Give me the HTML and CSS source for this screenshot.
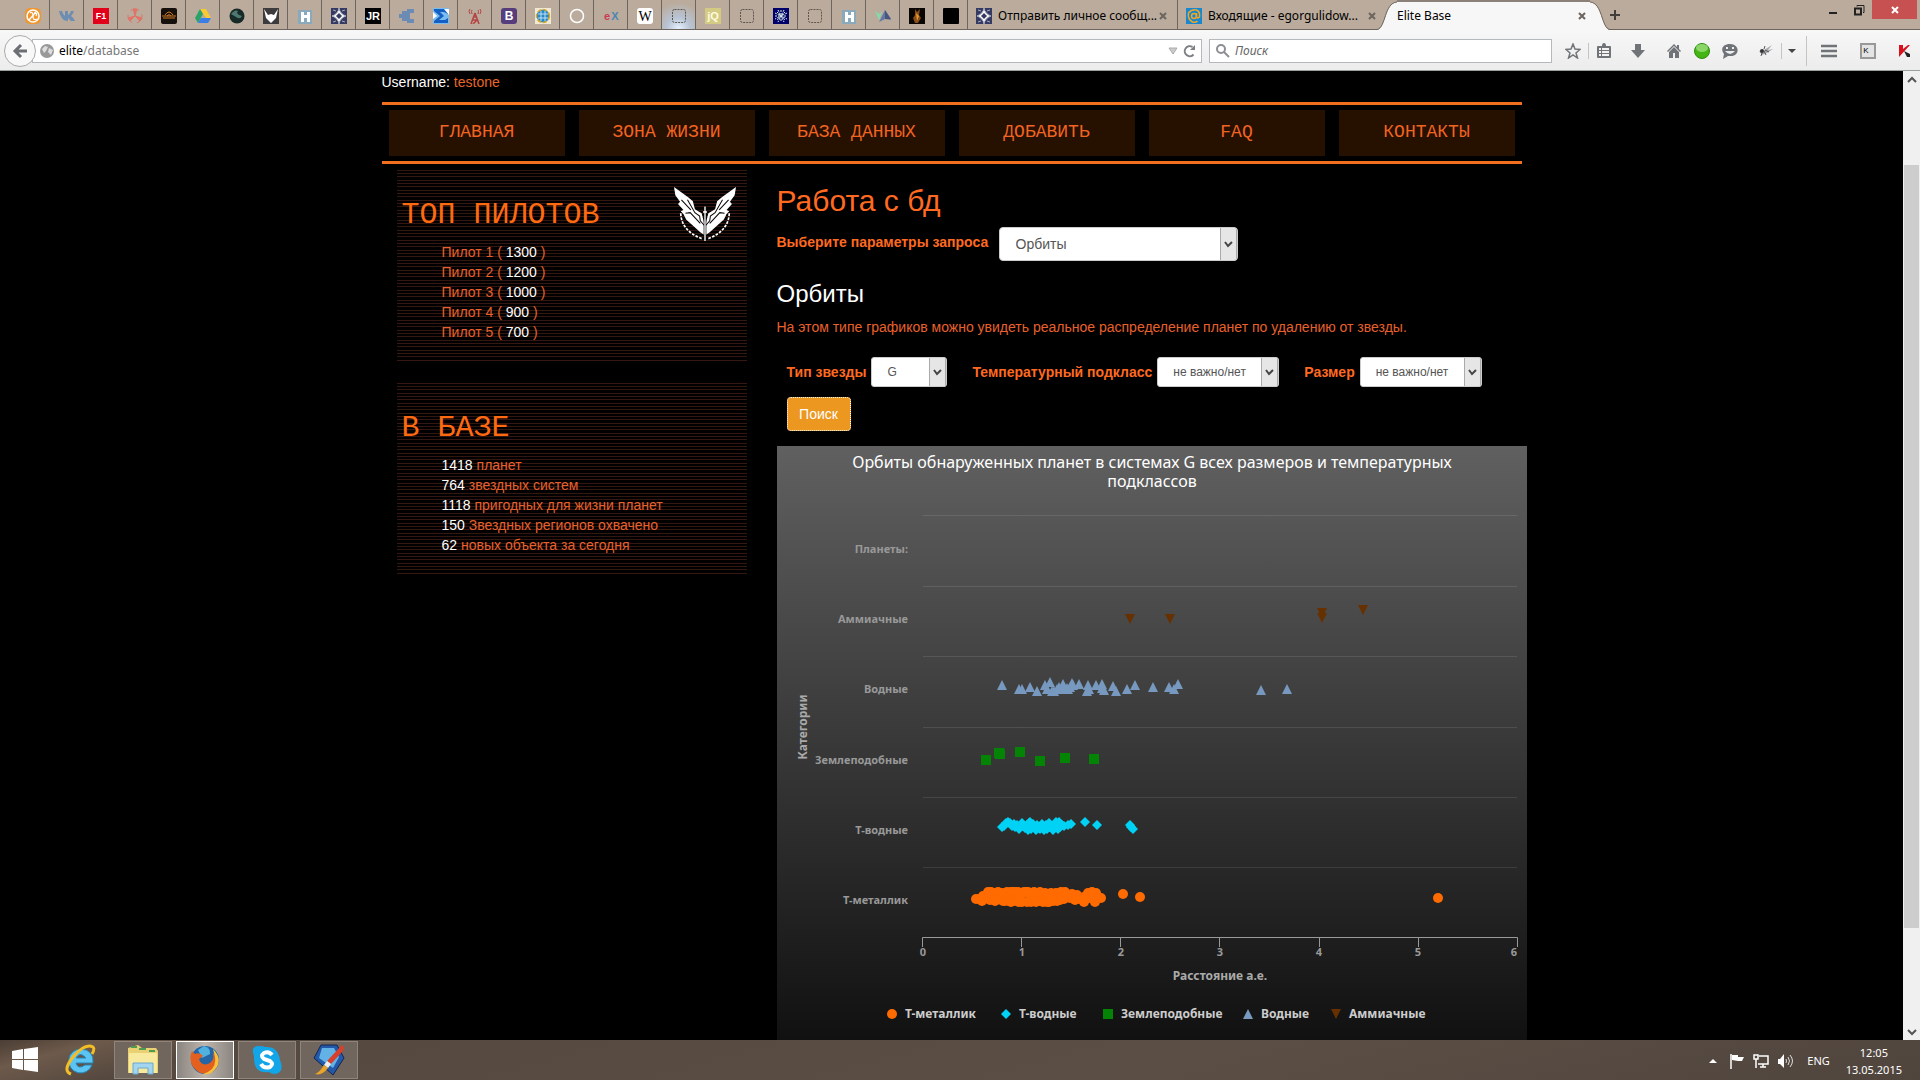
FILE: index.html
```html
<!DOCTYPE html>
<html lang="ru">
<head>
<meta charset="utf-8">
<title>Elite Base</title>
<link rel="stylesheet" href="styles.css">
</head>
<body>
<header class="browser">
  <div class="tabstrip">
    <nav class="pinned">
      <button class="pin"><svg viewBox="0 0 16 16"><rect width="16" height="16" rx="5" fill="#f0962e"/><circle cx="8" cy="8" r="6" fill="none" stroke="#fff" stroke-width="1.5"/><path d="M4 12L11 4M5 5q3-2 3 3t4 3M9 5q4 0 2 3" fill="none" stroke="#fff" stroke-width="1.3"/></svg></button>
      <button class="pin"><svg viewBox="0 0 16 16"><path d="M0 3h3q1 4 3 5V3h3v4q2-1 3-4h3q-1 3-3 5 3 2 4 5h-4l-3-3v3Q2 13 0 3z" fill="#6d8db3"/></svg></button>
      <button class="pin"><svg viewBox="0 0 16 16"><rect width="16" height="16" fill="#e2001a"/><text x="8" y="11" class="fav-text" fill="#fff">F1</text></svg></button>
      <button class="pin"><svg viewBox="0 0 16 16" fill="none" stroke="#e07468"><circle cx="8" cy="8" r="7" stroke-dasharray="9 5"/><path d="M8 8L6 1h4zM8 8L1 10l2 3zM8 8l7 2-2 3z" fill="#e07468"/></svg></button>
      <button class="pin"><svg viewBox="0 0 16 16"><rect width="16" height="16" rx="2" fill="#15100c"/><path d="M1 8h14M2 10h12M4 7q4-6 8 0M6 8q2-3 4 0" fill="none" stroke="#d07a26"/></svg></button>
      <button class="pin"><svg viewBox="0 0 16 16"><path d="M5 1h6l5 9h-5z" fill="#fbc933"/><path d="M5 1L0 10l3 5 5-9z" fill="#29a366"/><path d="M3 15l3-5h10l-3 5z" fill="#3d7de8"/></svg></button>
      <button class="pin"><svg viewBox="0 0 16 16"><circle cx="8" cy="8" r="7.5" fill="#182a28"/><path d="M2 6q4-5 7-3-3 3 4 5-2 4-6 1z" fill="#4e7770"/></svg></button>
      <button class="pin"><svg viewBox="0 0 16 16"><rect width="16" height="16" fill="#3d3b3d"/><path d="M1 1l4 6 3-1 3 1 4-6-2 9-5 5-5-5z" fill="#fff"/></svg></button>
      <button class="pin"><svg viewBox="0 0 16 16"><rect x="1" y="2" width="14" height="14" fill="#8aa9bc"/><path d="M4 4h3v3h3V4h3v10h-3v-4H7v4H4z" fill="#fff"/></svg></button>
      <button class="pin"><svg viewBox="0 0 16 16"><rect width="16" height="16" fill="#343a62"/><path d="M8 0q1 6 7 8-6 2-7 8-1-6-7-8 6-2 7-8M2 2l3 1M14 2l-3 1M2 14l3-1M14 14l-3-1" stroke="#aab" fill="#fff"/><path d="M8 5l3 3-3 3-3-3z" fill="#343a62"/></svg></button>
      <button class="pin"><svg viewBox="0 0 16 16"><rect width="16" height="16" fill="#000"/><text x="8" y="12" class="fav-mid" fill="#fff">JR</text></svg></button>
      <button class="pin"><svg viewBox="0 0 16 16"><path d="M0 6h3V3h5V1h7v4h-4v6h4v4H8v-2H3v-3H0z" fill="#6b8bb5"/></svg></button>
      <button class="pin"><svg viewBox="0 0 16 16"><rect width="16" height="16" fill="#79bdf0"/><path d="M1 1h14v5L11 4H7l4 4-5 4h6l3-2v5H1v-2l6-5-6-5z" fill="#145fc4"/><path d="M11 1h5v6zM0 4l4 4-4 3z" fill="#fff"/></svg></button>
      <button class="pin"><svg viewBox="0 0 16 16" fill="none" stroke="#b64443"><path d="M8 5L4 16M8 5l4 11M6 9h4M5 12h6M6 16l4-4" stroke-width="1.5"/><path d="M5 2q-1 1 0 4M3 1Q1 3 3 6M11 2q1 1 0 4M13 1q2 2 0 5"/></svg></button>
      <button class="pin"><svg viewBox="0 0 16 16"><rect width="16" height="16" rx="3" fill="#563d7c"/><text x="8" y="12" class="fav-letter" fill="#fff">B</text></svg></button>
      <button class="pin"><svg viewBox="0 0 16 16"><rect width="16" height="16" fill="#f0ead5"/><circle cx="8" cy="8" r="6.5" fill="#2987c9" stroke="#dea922" stroke-width="1.5" stroke-dasharray="4 2"/><path d="M3 6h10M3 10h10M6 3v10M10 3v10" stroke="#bfe0f2"/></svg></button>
      <button class="pin"><svg viewBox="0 0 16 16"><circle cx="8" cy="8" r="6.5" fill="none" stroke="#fff" stroke-width="1.5"/></svg></button>
      <button class="pin"><svg viewBox="0 0 16 16"><text x="4" y="12" class="fav-mid" fill="#cc3b55">e</text><text x="12" y="12" class="fav-mid" fill="#4a86b5">X</text></svg></button>
      <button class="pin"><svg viewBox="0 0 16 16"><rect width="16" height="16" rx="3" fill="#fff"/><text x="8" y="13" class="fav-serif">W</text></svg></button>
      <button class="pin glow"><svg viewBox="0 0 16 16"><rect x="1.500" y="1.500" width="13" height="13" rx="2" class="blank"/></svg></button>
      <button class="pin"><svg viewBox="0 0 16 16"><rect width="16" height="16" fill="#d3cb83"/><text x="8" y="12" class="fav-mid" fill="#fffbe0">jQ</text></svg></button>
      <button class="pin"><svg viewBox="0 0 16 16"><rect x="1.500" y="1.500" width="13" height="13" rx="2" class="blank"/></svg></button>
      <button class="pin"><svg viewBox="0 0 16 16"><rect width="16" height="16" fill="#00006b"/><path d="M8 2v12M2 8h12M4 4l8 8M12 4l-8 8M5 2l6 12M11 2L5 14M2 5l12 6M14 5L2 11" stroke="#d8f0e8" stroke-dasharray="2 1"/></svg></button>
      <button class="pin"><svg viewBox="0 0 16 16"><rect x="1.500" y="1.500" width="13" height="13" rx="2" class="blank"/></svg></button>
      <button class="pin"><svg viewBox="0 0 16 16"><rect x="1" y="2" width="14" height="14" fill="#8aa9bc"/><path d="M4 4h3v3h3V4h3v10h-3v-4H7v4H4z" fill="#fff"/></svg></button>
      <button class="pin"><svg viewBox="0 0 16 16"><path d="M0 3l4 9 3-8-3 2z" fill="#82dcaa"/><path d="M10 2L4 14l6-3 6 1z" fill="#6478a8"/><path d="M10 2v9l6 0z" fill="#49557c"/></svg></button>
      <button class="pin"><svg viewBox="0 0 16 16"><rect width="16" height="16" fill="#090503"/><path d="M6 1l2 3 3-3-1 6 2 3-3 5H6l-2-5 2-3z" fill="#8b4d16"/><path d="M7 5l1 8 2-5z" fill="#e29c36"/></svg></button>
      <button class="pin"><svg viewBox="0 0 16 16"><rect width="16" height="16" rx="1" fill="#000"/></svg></button>
    </nav>
    <div class="tab first">
      <svg class="fav" viewBox="0 0 16 16"><rect width="16" height="16" fill="#343a62"/><path d="M8 0q1 6 7 8-6 2-7 8-1-6-7-8 6-2 7-8M2 2l3 1M14 2l-3 1M2 14l3-1M14 14l-3-1" stroke="#aab" fill="#fff"/><path d="M8 5l3 3-3 3-3-3z" fill="#343a62"/></svg>
      <span class="tab-title">Отправить личное сообщ...</span>
      <button class="x"><svg viewBox="0 0 8 8"><path d="M1 1l6 6M7 1L1 7"/></svg></button>
    </div>
    <div class="tab second">
      <svg class="fav" viewBox="0 0 16 16"><rect width="16" height="16" fill="#1688cf"/><circle cx="8" cy="8" r="2.5" fill="none" stroke="#f5a623" stroke-width="1.5"/><path d="M10.500 5v4q1 2 3 0 1-5-3-7-5-1-8 3-1 6 4 9 3 1 5-1" fill="none" stroke="#f5a623" stroke-width="1.5"/></svg>
      <span class="tab-title">Входящие - egorgulidow...</span>
      <button class="x"><svg viewBox="0 0 8 8"><path d="M1 1l6 6M7 1L1 7"/></svg></button>
    </div>
    <svg class="curve" viewBox="0 0 20 30"><path d="M0 30C9 29 7 4 20 2V30z" fill="#f7f7f7"/><path d="M0 29.500C9 28 7 3 20 2" fill="none" stroke="#6d655e"/></svg>
    <div class="tab active">
      <span class="tab-title">Elite Base</span>
      <button class="x"><svg viewBox="0 0 8 8"><path d="M1 1l6 6M7 1L1 7"/></svg></button>
    </div>
    <svg class="curve" viewBox="0 0 20 30"><path d="M20 30C11 29 13 4 0 2V30z" fill="#f7f7f7"/><path d="M20 29.500C11 28 13 3 0 2" fill="none" stroke="#6d655e"/></svg>
    <button class="newtab"><svg viewBox="0 0 10 10"><path d="M5 0v10M0 5h10" stroke="#443e39" stroke-width="2"/></svg></button>
    <div class="winbtns">
      <button class="wb"><svg viewBox="0 0 12 12"><path d="M2 9h8" stroke="#222" stroke-width="2"/></svg></button>
      <button class="wb"><svg viewBox="0 0 12 12" fill="none" stroke="#222"><path d="M4 2.500V1.500h7v7h-1"/><path d="M2 4.500h6v6H2z" stroke-width="2"/></svg></button>
      <button class="wb close"><svg viewBox="0 0 12 12"><path d="M3 3l6 6M9 3L3 9" stroke="#fff" stroke-width="2"/></svg></button>
    </div>
  </div>
  <div class="toolbar">
    <button class="back"><svg viewBox="0 0 16 16"><path d="M9 2L3 8l6 6M3 8h12" fill="none" stroke="#6b6e72" stroke-width="3"/></svg></button>
    <div class="urlbox">
      <svg class="i14" viewBox="0 0 14 14"><circle cx="7" cy="7" r="7" fill="#999"/><path d="M2 5l3-3 3 1-2 4-2 2zM9 4l4 2-2 5-3-3z" fill="#ddd"/></svg>
      <div class="url"><span class="host">elite</span>/database</div>
      <svg class="drop" viewBox="0 0 10 8"><path d="M1 1h8L5 7z" fill="#ccc" stroke="#aaa"/></svg>
      <svg class="i14" viewBox="0 0 14 14"><path d="M10.500 10.500A5 5 0 1 1 9.500 3" fill="none" stroke="#7c8084" stroke-width="2"/><path d="M12 1v5H7z" fill="#7c8084"/></svg>
    </div>
    <div class="searchbox">
      <svg class="i14" viewBox="0 0 14 14" fill="none" stroke="#8b8f94" stroke-width="2"><circle cx="5" cy="5" r="4"/><path d="M8 8l5 5"/></svg>
      <input class="search" type="text" placeholder="Поиск" aria-label="Поиск">
    </div>
    <div class="tools">
      <button><svg viewBox="0 0 16 16"><path d="M8 1l2 5 5 .5-4 3.500 1.500 5L8 12l-4.500 3L5 10 1 6.500 6 6z" fill="none" stroke="#707478" stroke-width="1.500"/></svg></button>
      <i class="sep"></i>
      <button><svg viewBox="0 0 16 16"><path d="M2 3h12q1 0 1 1v10q0 1-1 1H2q-1 0-1-1V4q0-1 1-1zM6 3q0-3 2-3t2 3z" fill="#707478"/><path d="M3 6h2m1 0h7M3 9h2m1 0h7M3 12h2m1 0h7" fill="none" stroke="#f2f2f2" stroke-width="2"/></svg></button>
      <button class="dl"><svg viewBox="0 0 16 16"><path d="M5 1h6v6h4l-7 8-7-8h4z" fill="#707478"/></svg></button>
      <button class="home"><svg viewBox="0 0 16 16"><path d="M8 1L1 8l1 1 6-6 6 6 1-1-2-2V2h-2v2z" fill="#707478"/><path d="M8 4l-5 5v6h4v-5h2v5h4V9z" fill="#707478"/></svg></button>
      <button class="green"><svg viewBox="0 0 16 16"><circle cx="8" cy="8" r="7.500" fill="#43b514" stroke="#2f8b10"/><ellipse cx="8" cy="5" rx="6" ry="4" fill="#8ad667"/></svg></button>
      <button class="chat"><svg viewBox="0 0 16 16"><path d="M8 1c10 0 10 12 1 12l-3 0-5 3 1-5C-2 6 1 1 8 1z" fill="#707478"/><path d="M5 4v2M11 4v2" stroke="#eee" stroke-width="2"/><path d="M3 8h10q-5 6-10 0z" fill="#eee"/></svg></button>
      <button class="fly"><svg viewBox="0 0 16 16"><path d="M1 8l5-1 8-5-4 5 5-1-6 4-5 2z" fill="#a9adaf"/><circle cx="4" cy="8" r="2" fill="#333"/><path d="M6 8l2 4M4 10l-1 3M7 7l4 2M6 6l1-3" stroke="#555"/></svg></button>
      <i class="sep"></i>
      <button class="narrow"><svg viewBox="0 0 10 16"><path d="M1 6h8L5 10z" fill="#444"/></svg></button>
      <i class="sep tall"></i>
      <button class="menu"><svg viewBox="0 0 16 16"><path d="M0 3h16M0 8h16M0 13h16" stroke="#707478" stroke-width="2.500"/></svg></button>
      <button class="kbd"><svg viewBox="0 0 16 16"><rect x="1" y="1" width="14" height="14" fill="#e4e4e4" stroke="#999" stroke-width="2"/><text x="6" y="10" class="fav-small">K</text></svg></button>
      <button class="kasp"><svg viewBox="0 0 16 16"><path d="M3 2h4v4l5-4h2L3 14z" fill="#d8121c"/><path d="M8 8l6 3v3h-3z" fill="#222"/></svg></button>
    </div>
  </div>
</header>

<div class="viewport">
<div class="page">
  <div class="container">
    <p class="user">Username: <a href="#">testone</a></p>
    <nav class="mainnav">
      <a href="#">ГЛАВНАЯ</a><a href="#">ЗОНА ЖИЗНИ</a><a href="#">БАЗА ДАННЫХ</a><a href="#">ДОБАВИТЬ</a><a href="#">FAQ</a><a href="#">КОНТАКТЫ</a>
    </nav>
    <div class="columns">
      <aside class="side">
        <section class="panel">
          <div class="panel-head">
            <h2>ТОП ПИЛОТОВ</h2>
            <svg class="emblem" viewBox="0 0 184 160">
              <defs><g id="wing">
                <path d="M0 0L42 30 56 42 62 66 82 78 90 108V142L78 134 36 96 28 80 20 72 28 68 12 50 18 44 4 24z" fill="#fff"/>
                <path d="M40 38l22 38 14 10 2 14 12 14M34 78l14-2 30 32M22 38l28 30" fill="none" stroke="#0a0403" stroke-width="3"/>
                <path d="M20 78Q22 130 82 153" fill="none" stroke="#fff" stroke-width="5" stroke-dasharray="8 4"/>
              </g></defs>
              <use href="#wing"/><use href="#wing" transform="translate(184 0) scale(-1 1)"/>
              <path d="M92 58v100" stroke="#000" stroke-width="8"/><path d="M92 58v102M86 74h12" stroke="#fff" stroke-width="4"/>
            </svg>
          </div>
          <ul>
            <li>Пилот 1 ( <b>1300</b> )</li><li>Пилот 2 ( <b>1200</b> )</li><li>Пилот 3 ( <b>1000</b> )</li><li>Пилот 4 ( <b>900</b> )</li><li>Пилот 5 ( <b>700</b> )</li>
          </ul>
        </section>
        <section class="panel">
          <div class="panel-head"><h2>В БАЗЕ</h2></div>
          <ul>
            <li><b>1418</b> планет</li><li><b>764</b> звездных систем</li><li><b>1118</b> пригодных для жизни планет</li><li><b>150</b> Звездных регионов охвачено</li><li><b>62</b> новых объекта за сегодня</li>
          </ul>
        </section>
      </aside>
      <main class="content">
        <h1>Работа с бд</h1>
        <div class="query"><label for="kind">Выберите параметры запроса</label><select id="kind" class="wide"><option>Орбиты</option></select></div>
        <h3>Орбиты</h3>
        <p class="lead">На этом типе графиков можно увидеть реальное распределение планет по удалению от звезды.</p>
        <form class="filters">
          <div class="field"><label for="star">Тип звезды</label><select id="star" class="short"><option>G</option></select></div>
          <div class="field"><label for="temp">Температурный подкласс</label><select id="temp"><option>не важно/нет</option></select></div>
          <div class="field"><label for="size">Размер</label><select id="size"><option>не важно/нет</option></select></div>
          <button type="button" class="go">Поиск</button>
        </form>
        <svg class="chart" viewBox="0 0 750 600">
          <defs>
            <linearGradient id="bg" x1="0" y1="0" x2="0" y2="1"><stop offset="0" stop-color="#606060"/><stop offset="1" stop-color="#101010"/></linearGradient>
            <marker id="m-circle" viewBox="0 0 10 10" refX="5" refY="5" markerWidth="10" markerHeight="10" markerUnits="userSpaceOnUse"><circle cx="5" cy="5" r="5" fill="#ff6b00"/></marker>
            <marker id="m-diamond" viewBox="0 0 10 10" refX="5" refY="5" markerWidth="10" markerHeight="10" markerUnits="userSpaceOnUse"><path d="M5 0l5 5-5 5-5-5z" fill="#00d2f5"/></marker>
            <marker id="m-square" viewBox="0 0 10 10" refX="5" refY="5" markerWidth="10" markerHeight="10" markerUnits="userSpaceOnUse"><path d="M0 0h10v10H0z" fill="#048404"/></marker>
            <marker id="m-up" viewBox="0 0 10 10" refX="5" refY="5" markerWidth="10" markerHeight="10" markerUnits="userSpaceOnUse"><path d="M5 0l5 10H0z" fill="#7798bf"/></marker>
            <marker id="m-down" viewBox="0 0 10 10" refX="5" refY="5" markerWidth="10" markerHeight="10" markerUnits="userSpaceOnUse"><path d="M0 0h10L5 10z" fill="#663000"/></marker>
          </defs>
          <rect width="750" height="600" fill="url(#bg)"/>
          <g class="c-title"><text x="375" y="22">Орбиты обнаруженных планет в системах G всех размеров и температурных</text><text x="375" y="41">подклассов</text></g>
          <path class="grid" d="M146 69.500h594M146 140.500h594M146 210.500h594M146 281.500h594M146 351.500h594M146 421.500h594"/>
          <path class="axis" d="M145.500 501v-9.500h595V501M244.500 492v9M343.500 492v9M442.500 492v9M542.500 492v9M641.500 492v9"/>
          <g class="c-rows"><text x="131" y="107">Планеты:</text><text x="131" y="177">Аммиачные</text><text x="131" y="247">Водные</text><text x="131" y="318">Землеподобные</text><text x="131" y="388">Т-водные</text><text x="131" y="458">Т-металлик</text></g>
          <g class="c-ticks"><text x="146" y="510">0</text><text x="245" y="510">1</text><text x="344" y="510">2</text><text x="443" y="510">3</text><text x="542" y="510">4</text><text x="641" y="510">5</text><text x="737" y="510">6</text></g>
          <text class="c-axis" x="443" y="534">Расстояние а.е.</text>
          <text class="c-axis" transform="translate(30 281) rotate(-90)">Категории</text>
          <path class="series down" d="M353 173L393 173 545 172 545 167 586 164"/>
          <path class="series up" d="M225 239L245 243 242 243 253 241 260 245 268 239 273 236 270 243 275 245 277 245 280 243 282 241 286 238 286 243 290 242 293 241 295 237 296 239 291 243 302 238 311 239 312 243 310 245 319 239 325 238 325 242 327 244 336 240 339 245 350 243 358 239 376 241 392 241 397 243 401 238 484 244 510 243"/>
          <path class="series square" d="M209 314L222 307 223 308 243 306 263 315 288 312 317 313"/>
          <path class="series diamond" d="M225 381L227 380 229 377 231 376 233 377 235 380 237 378 238 381 240 379 242 383 243 381 245 377 246 380 248 382 250 379 252 377 251 384 253 376 254 383 256 378 257 381 259 384 260 379 262 382 263 383 265 378 266 381 267 384 269 379 270 383 272 377 273 381 275 380 276 384 278 378 279 376 281 383 282 376 283 381 285 379 287 380 291 379 294 378 308 376 320 379 353 379 354 381 356 383"/>
          <path class="series circle" d="M199 453L202 453 205 455 206 450 209 452 211 446 213 454 214 446 217 450 218 455 218 447 221 446 223 453 225 447 226 455 228 455 230 446 232 451 232 455 234 456 234 446 236 446 239 455 238 446 241 446 243 451 242 456 245 456 247 446 249 446 250 456 251 446 254 452 254 456 256 455 257 446 260 449 259 456 262 455 263 446 266 456 268 447 270 452 270 456 272 456 274 447 276 455 279 447 281 451 280 455 283 454 284 446 287 453 288 446 291 449 293 452 295 448 298 454 300 449 303 453 307 456 307 451 311 447 313 452 315 446 318 456 319 447 321 451 324 452 346 448 363 451 661 452"/>
          <g class="legend"><circle cx="115" cy="568" r="5" fill="#ff6b00"/><path d="M229 563l5 5-5 5-5-5z" fill="#00d2f5"/><path d="M326 563h10v10h-10z" fill="#048404"/><path d="M471 563l5 10h-10z" fill="#7798bf"/><path d="M554 563h10l-5 10z" fill="#663000"/>
          <text x="128" y="572">Т-металлик</text><text x="242" y="572">Т-водные</text><text x="344" y="572">Землеподобные</text><text x="484" y="572">Водные</text><text x="572" y="572">Аммиачные</text></g>
        </svg>
      </main>
    </div>
  </div>
</div>
<div class="scrollbar">
  <button><svg viewBox="0 0 17 17"><path d="M5 11l4-4 4 4" fill="none" stroke="#555" stroke-width="2"/></svg></button>
  <div class="track"><div class="thumb"></div></div>
  <button><svg viewBox="0 0 17 17"><path d="M5 7l4 4 4-4" fill="none" stroke="#555" stroke-width="2"/></svg></button>
</div>
</div>

<footer class="taskbar">
  <button class="start"><svg viewBox="0 0 26 26"><path d="M0 4l11-2v10H0zM12 2l14-2v12H12zM0 13h11v10L0 21zM12 13h14v12l-14-2z" fill="#fff"/></svg></button>
  <button class="ie"><svg viewBox="0 0 32 32"><path d="M17 5a12 12 0 1 0 11 16h-7q-7 5-9-2h17Q30 6 17 5zM12 14q4-7 10 0z" fill="#5bc4f2" stroke="#2489bd"/><path d="M7 30Q-2 27 9 13 21-1 29 3q2 2-1 7" fill="none" stroke="#f2bd25" stroke-width="3"/></svg></button>
  <button class="task"><svg viewBox="0 0 32 32"><path d="M1 4l10-3 4 3h14l2 3v22H1z" fill="#e9d073"/><path d="M2 9h28v20H2z" fill="#f7e99d"/><path d="M4 3h6M12 5h7M22 7h6" stroke="#4c9d53" stroke-width="2"/><path d="M6 30V19h20v11h-5v-6H11v6z" fill="#a4d5f0" stroke="#6ba8cc"/></svg></button>
  <button class="task on"><svg viewBox="0 0 32 32"><circle cx="16" cy="16" r="14" fill="#2465a8"/><path d="M15 2q7 2 6 8l-8 4-4-8z" fill="#50b0de"/><path d="M3 7l3 3q5-2 8 2l-4 3q2 7 9 5 7-3 5-11 6 4 2 13Q16 36 5 24-1 16 3 7z" fill="#e4601e"/><path d="M24 5q9 9 4 18-6 9-14 7 14-4 12-17z" fill="#fbc13a"/></svg></button>
  <button class="task"><svg viewBox="0 0 32 32"><path d="M3 12Q-1 2 8 2q4 0 6 1 13-1 15 13 5 12-5 14-4 0-6-2Q2 30 3 12z" fill="#12a5e8"/><path d="M21 11q-3-4-8-2-4 3 0 6l6 2q4 3 0 6-6 2-9-3" fill="none" stroke="#fff" stroke-width="4"/></svg></button>
  <button class="task"><svg viewBox="0 0 32 32"><path d="M8 1h16l7 13-11 17L1 14z" fill="#2458a9" stroke="#12254e"/><path d="M9 4l12 0 5 9-6 11L6 14z" fill="#63b2e6"/><path d="M29 1q4 2 0 7L18 20l-4-3z" fill="#d6402c"/><path d="M14 17l4 3-3 4-4-3z" fill="#eee"/><path d="M11 21l4 3q-6 8-13 6 4-1 9-9z" fill="#eaa428"/></svg></button>
  <div class="tray">
    <svg class="t-up" viewBox="0 0 8 6"><path d="M0 5h8L4 1z" fill="#fff"/></svg>
    <svg viewBox="0 0 16 16"><path d="M2 1v15" stroke="#fff" stroke-width="1.500"/><path d="M3 2h6v2h6l-2 4H9L3 7z" fill="#fff"/></svg>
    <svg viewBox="0 0 16 16" fill="none" stroke="#fff" stroke-width="1.500"><path d="M6 3h9v8H5M10 11v3M7 14h6M3 6v9M1 2h4v4H1z"/></svg>
    <svg viewBox="0 0 16 16"><path d="M1 6h2l4-5v14l-4-4H1z" fill="#fff"/><path d="M9 6q1 2 0 4M11 4q3 4 0 8M13 2q5 6 0 12" fill="none" stroke="#ddd"/></svg>
    <span class="lang">ENG</span>
    <div class="clock"><span>12:05</span><span>13.05.2015</span></div>
  </div>
</footer>
</body>
</html>
```
FILE: styles.css
```css
* { box-sizing: border-box; }
body { margin: 0; height: 100vh; display: flex; flex-direction: column; overflow: hidden; background: #000; font: 14px/20px "Liberation Sans", Arial, sans-serif; color: #fff; }
button { border: 0; padding: 0; background: none; font: inherit; color: inherit; display: flex; align-items: center; justify-content: center; flex: none; }
svg { display: block; flex: none; }
a { color: #e8662a; text-decoration: none; }

.browser { flex: none; font: 12px/16px "Noto Sans", "Open Sans", sans-serif; color: #000; }
.tabstrip { display: flex; height: 30px; background: #baab9c; box-shadow: inset 0 -1px #6d655e; }
.pinned { display: flex; padding-left: 16px; }
.pin { width: 34px; height: 29px; padding-top: 3px; border-right: 1px solid #6d655e; }
.pin svg, .fav { width: 16px; height: 16px; }
.glow { background: radial-gradient(circle at 50% 100%, #e8f3ff 0, #b8c4d4 35%, transparent 80%); }
.blank { fill: none; stroke: #5d554e; stroke-dasharray: 2 1; }
.fav-text { font: bold 9px "Liberation Sans", sans-serif; text-anchor: middle; }
.fav-mid { font: bold 11px "Liberation Sans", sans-serif; text-anchor: middle; }
.fav-letter { font: bold 12px "Liberation Sans", sans-serif; text-anchor: middle; }
.fav-serif { font: 14px "Liberation Serif", serif; text-anchor: middle; }
.fav-small { font: 8px "Liberation Sans", sans-serif; text-anchor: middle; }
.tab { display: flex; align-items: center; height: 29px; padding: 3px 10px 0 8px; gap: 6px; }
.tab-title { flex: 1; min-width: 0; white-space: nowrap; }
.first { width: 210px; border-right: 1px solid #6d655e; }
.second { width: 199px; padding-right: 1px; }
.active { width: 193px; height: 30px; padding: 0 4px 0 0; background: #f7f7f7; border-top: 2px solid #8b8178; }
.x svg { width: 8px; height: 8px; stroke: #6b6560; stroke-width: 2; }
.curve { width: 20px; height: 30px; }
.newtab svg { width: 10px; height: 10px; }
.winbtns { display: flex; margin-left: auto; padding-right: 3px; }
.wb { width: 26px; height: 19px; }
.wb svg { width: 12px; height: 12px; }
.close { width: 45px; background: #c75050; }

.toolbar { display: flex; align-items: center; height: 41px; padding: 1px 0 0 4px; background: linear-gradient(#f7f7f7, #ececec); border-bottom: 1px solid #9aa09c; }
.back { width: 32px; height: 32px; border: 1px solid #aaa; border-radius: 50%; background: #f8f8f8; z-index: 1; }
.back svg { width: 16px; height: 16px; }
.urlbox, .searchbox { display: flex; align-items: center; height: 24px; background: #fff; border: 1px solid #b5b9bb; }
.urlbox { flex: 1; margin-left: -4px; padding: 0 4px 0 7px; gap: 5px; }
.url { flex: 1; color: #777; }
.host { color: #000; }
.i14 { width: 14px; height: 14px; }
.drop { width: 10px; height: 8px; }
.searchbox { width: 343px; margin-left: 7px; padding-left: 6px; gap: 5px; }
.search { flex: 1; border: 0; outline: 0; padding: 0; font: italic 12px/16px "Noto Sans", "Open Sans", sans-serif; }
.search::placeholder { color: #666; opacity: 1; }
.tools { display: flex; align-items: center; width: 368px; padding-left: 13px; }
.tools svg { width: 16px; height: 16px; }
.sep { width: 1px; height: 16px; background: #c4c4c4; margin: 0 7px; }
.tall { height: 30px; }
.dl { margin-left: 18px; }
.home { margin-left: 20px; }
.green, .chat { margin-left: 12px; }
.fly { margin-left: 20px; }
.narrow { width: 10px; margin: 0 2px 0 -2px; }
.menu { margin-left: 7px; }
.kbd { margin-left: 23px; }
.kasp { margin-left: 20px; }

.viewport { flex: 1; min-height: 0; display: flex; }
.page { flex: 1; overflow: hidden; }
.container { width: 1140px; max-width: 100%; margin: 0 auto; }
.user { margin: 0; padding: 1px 0 10px; }
.mainnav { display: grid; grid-template-columns: repeat(6, 1fr); gap: 14px; padding: 5px 7px; border: solid #f26f1f; border-width: 3px 0; }
.mainnav a { background: #261000; color: #f26422; font: 18px/24px "Liberation Mono", monospace; text-align: center; padding: 10px 0 12px; }
.columns { display: grid; grid-template-columns: 350px minmax(0, 1fr); gap: 30px; padding-left: 15px; margin-right: -5px; }
.side { padding-top: 6px; }
.panel { height: 191px; margin-bottom: 22px; background:
  linear-gradient(#331710 1px, transparent 1px 3px, #331710 3px 4px, transparent 4px 6px, #331710 6px 7px, transparent 7px) 0 0 / 100% 10px; }
.panel-head { display: flex; justify-content: space-between; height: 71px; padding: 17px 11px 0 5px; }
.panel h2 { margin: 12px 0 0; font: 30px/33px "Liberation Mono", monospace; color: #ff6a10; }
.emblem { width: 62px; height: 54px; }
.panel ul { list-style: none; margin: 0; padding: 1px 0 0 45px; color: #e8602c; }
.panel b { font-weight: normal; color: #fff; }

.content { padding-top: 20px; }
h1 { margin: 0 0 9px; font-size: 30px; line-height: 34px; font-weight: normal; color: #ff6a20; }
label { font-weight: bold; color: #ff6a20; }
.query { display: flex; gap: 4px; }
.query label { width: 218px; padding-top: 5px; }
select { appearance: none; width: 122px; height: 30px; padding: 0 15px; border: 1px solid #ccc; border-radius: 3px; color: #555; font: 12px/18px "Liberation Sans", Arial, sans-serif;
  background: #fff url("data:image/svg+xml,%3Csvg xmlns='http://www.w3.org/2000/svg' width='17' height='40'%3E%3Cpath d='M.5 .5h16v39H.5z' fill='%23e6e6e6' stroke='%23aaa'/%3E%3Cpath d='M5 18l3 4 4-4' fill='none' stroke='%23444' stroke-width='2'/%3E%3C/svg%3E") right center no-repeat; }
.wide { width: 239px; height: 34px; font-size: 14px; padding: 0 16px; border-radius: 4px; }
.short { width: 76px; }
h3 { margin: 20px 0 0; font-size: 24px; line-height: 26px; font-weight: normal; }
.lead { margin: 10px 0 20px; color: #e8602c; }
.filters { display: flex; flex-wrap: wrap; gap: 10px 25px; padding: 0 10px 15px; }
.field { display: flex; align-items: center; gap: 5px; }
.go { width: 64px; height: 34px; border: 1px dotted #fff; border-radius: 4px; background: #ec971f; color: #fff; }

.chart { width: 100%; height: auto; font-family: "Noto Sans", "Open Sans", sans-serif; }
.c-title { font-size: 16px; fill: #fff; text-anchor: middle; }
.grid { stroke: rgba(255, 255, 255, .1); }
.axis { stroke: #999; fill: none; }
.c-rows { font-size: 11px; font-weight: bold; fill: #999; text-anchor: end; }
.c-ticks { font-size: 11px; font-weight: bold; fill: #999; text-anchor: middle; }
.c-axis { font-size: 12px; font-weight: bold; fill: #aaa; text-anchor: middle; }
.legend { font-size: 12px; font-weight: bold; }
.legend text { fill: #ccc; }
.series { fill: none; }
.circle { marker: url(#m-circle); }
.diamond { marker: url(#m-diamond); }
.square { marker: url(#m-square); }
.up { marker: url(#m-up); }
.down { marker: url(#m-down); }

.scrollbar { flex: none; width: 17px; display: flex; flex-direction: column; background: #f0f0f0; }
.scrollbar svg { width: 17px; height: 17px; }
.track { flex: 1; padding: 77px 1px 95px; }
.thumb { height: 100%; background: #cdcdcd; }

.taskbar { flex: none; display: flex; align-items: center; height: 40px; padding-left: 12px; gap: 4px; background: linear-gradient(165deg, #4b3e35 0, #6d5a4b 5%, #55483f 12%, #5b4f45 60%, #50453d 100%); }
.start { width: 26px; }
.start svg { width: 26px; height: 26px; }
.ie { width: 60px; margin-left: 8px; }
.ie svg, .task svg { width: 32px; height: 32px; }
.task { width: 58px; height: 38px; border: 1px solid #8e857c; background: #70665d; }
.on { background: linear-gradient(90deg, #8b8581, #bdb5ac, #8b8581); border-color: #fff; }
.tray { margin-left: auto; display: flex; align-items: center; gap: 8px; padding: 1px 18px 0 0; font: 11px/17px "Noto Sans", "Open Sans", sans-serif; }
.tray svg { width: 16px; height: 16px; }
.tray .t-up { width: 8px; height: 6px; margin-right: 4px; }
.lang { margin: 0 8px 0 6px; }
.clock { display: flex; flex-direction: column; align-items: center; }
```
